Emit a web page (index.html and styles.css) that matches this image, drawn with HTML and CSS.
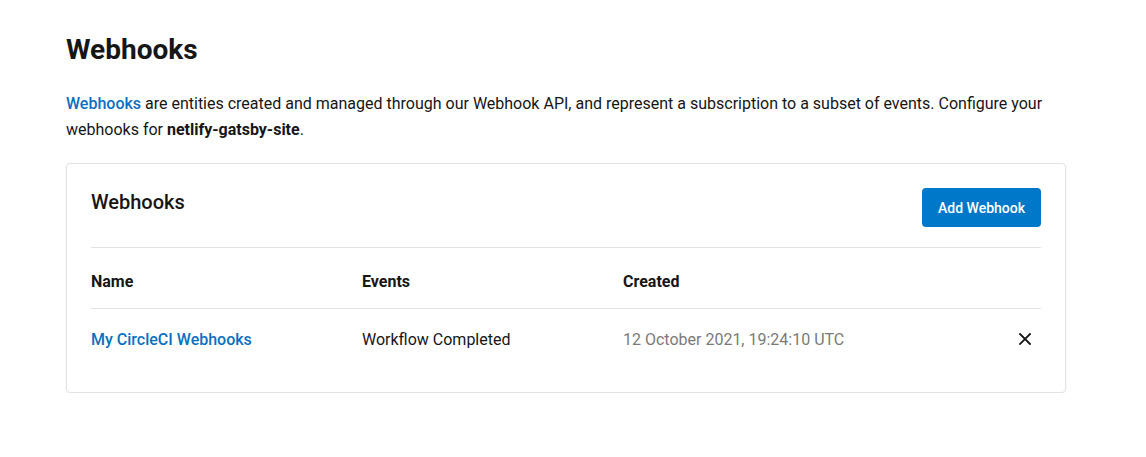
FILE: index.html
```html
<!DOCTYPE html>
<html lang="en">
<head>
    <meta charset="UTF-8">
    <meta name="viewport" content="width=device-width, initial-scale=1.0">
    <title>Webhooks</title>
    <link rel="stylesheet" href="styles.css">
</head>
<body>
    <div class="page">
        <h1 class="page-title">Webhooks</h1>
        <p class="intro">
            <a href="#" class="link">Webhooks</a> are entities created and managed through our Webhook API, and represent a subscription to a subset of events. Configure your webhooks for <strong>netlify-gatsby-site</strong>.
        </p>

        <div class="card">
            <div class="card-header">
                <h2 class="card-title">Webhooks</h2>
                <button class="button">Add Webhook</button>
            </div>
            <div class="table">
                <div class="row head">
                    <span>Name</span>
                    <span>Events</span>
                    <span>Created</span>
                    <span></span>
                </div>
                <div class="row">
                    <a href="#" class="link name">My CircleCI Webhooks</a>
                    <span>Workflow Completed</span>
                    <span class="date">12 October 2021, 19:24:10 UTC</span>
                    <button class="remove" aria-label="Remove">
                        <svg width="12" height="12" viewBox="0 0 12 12">
                            <path d="M1 1L11 11M11 1L1 11" stroke="#161616" stroke-width="1.8" stroke-linecap="square"/>
                        </svg>
                    </button>
                </div>
            </div>
        </div>
    </div>
</body>
</html>
```

FILE: styles.css
```css
*{
   margin: 0;
   padding: 0;
   box-sizing: border-box;
}

body{
   font-family: Roboto, "Noto Sans", sans-serif;
   font-size: 16px;
   color: #161616;
   background-color: white;
}

.page{
   width: 1000px;
   margin-left: 66px;
   padding-top: 33px;
}

.page-title{
   font-size: 28px;
   font-weight: 700;
   line-height: 34px;
}

.intro{
   margin-top: 24px;
   line-height: 26px;
   color: #161616;
}

.intro strong{
   font-weight: 700;
}

.link{
   color: #0b6fc1;
   text-decoration: none;
   font-weight: 500;
}

.card{
   margin-top: 20px;
   border: 1px solid #e3e3e3;
   border-radius: 4px;
   box-shadow: 0 1px 3px rgba(0, 0, 0, 0.06);
   padding: 24px 24px 23px;
}

.card-header{
   display: flex;
   justify-content: space-between;
   align-items: flex-start;
   padding-bottom: 20px;
   border-bottom: 1px solid #e3e3e3;
}

.card-title{
   font-size: 20px;
   font-weight: 500;
   line-height: 28px;
}

.button{
   width: 119px;
   height: 39px;
   border: none;
   border-radius: 4px;
   background-color: #0078ca;
   color: white;
   font-family: inherit;
   font-size: 14px;
   font-weight: 500;
   cursor: pointer;
}

.row{
   display: grid;
   grid-template-columns: 271px 261px 1fr 40px;
   align-items: center;
   height: 60px;
}

.row.head{
   height: 61px;
   padding-top: 6px;
   font-weight: 700;
   border-bottom: 1px solid #e3e3e3;
}

.date{
   color: #7a7a7a;
}

.remove{
   display: flex;
   justify-content: flex-end;
   padding-right: 10px;
   background: none;
   border: none;
   cursor: pointer;
}
```
